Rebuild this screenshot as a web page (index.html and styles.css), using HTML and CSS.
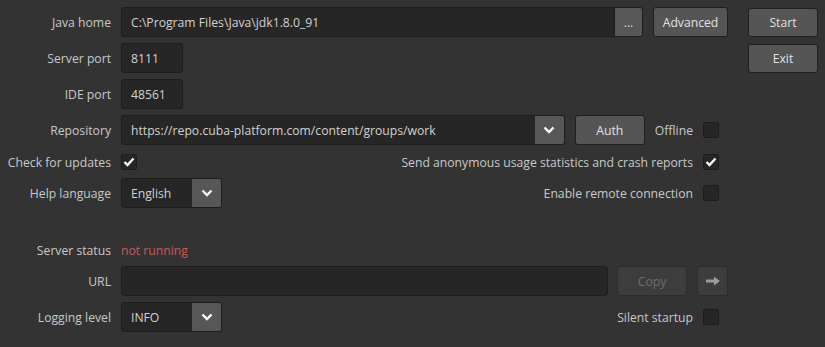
FILE: index.html
```html
<!DOCTYPE html>
<html lang="en">
<head>
    <meta charset="UTF-8">
    <title>Studio Server</title>
    <link rel="stylesheet" href="styles.css">
</head>
<body>
    <div class="layout">
        <div class="form">
            <div class="row">
                <label class="label">Java home</label>
                <div class="field grow joined">
                    <span class="value">C:\Program Files\Java\jdk1.8.0_91</span>
                    <span class="browse">...</span>
                </div>
                <button class="btn advanced">Advanced</button>
            </div>
            <div class="row">
                <label class="label">Server port</label>
                <div class="field short"><span class="value">8111</span></div>
            </div>
            <div class="row">
                <label class="label">IDE port</label>
                <div class="field short"><span class="value">48561</span></div>
            </div>
            <div class="row">
                <label class="label">Repository</label>
                <div class="field grow combo">
                    <span class="value">https://repo.cuba-platform.com/content/groups/work</span>
                    <span class="arrow">
                        <svg width="12" height="8" viewBox="0 0 12 8"><polyline points="1.5,1.5 6,6 10.5,1.5" fill="none" stroke="#fff" stroke-width="2.4"/></svg>
                    </span>
                </div>
                <button class="btn auth">Auth</button>
                <span class="opt">Offline</span>
                <span class="check"></span>
            </div>
            <div class="row small-top">
                <label class="label">Check for updates</label>
                <span class="check on">
                    <svg width="12" height="10" viewBox="0 0 12 10"><polyline points="1.5,5 4.5,8 10.5,1.5" fill="none" stroke="#fff" stroke-width="2.4"/></svg>
                </span>
                <span class="spacer"></span>
                <span class="opt">Send anonymous usage statistics and crash reports</span>
                <span class="check on">
                    <svg width="12" height="10" viewBox="0 0 12 10"><polyline points="1.5,5 4.5,8 10.5,1.5" fill="none" stroke="#fff" stroke-width="2.4"/></svg>
                </span>
            </div>
            <div class="row tight-top">
                <label class="label">Help language</label>
                <div class="field combo select">
                    <span class="value">English</span>
                    <span class="arrow">
                        <svg width="12" height="8" viewBox="0 0 12 8"><polyline points="1.5,1.5 6,6 10.5,1.5" fill="none" stroke="#fff" stroke-width="2.4"/></svg>
                    </span>
                </div>
                <span class="spacer"></span>
                <span class="opt">Enable remote connection</span>
                <span class="check"></span>
            </div>

            <div class="row status-row">
                <label class="label">Server status</label>
                <span class="status">not running</span>
            </div>
            <div class="row tight-top">
                <label class="label">URL</label>
                <div class="field grow"></div>
                <button class="btn copy" disabled>Copy</button>
                <button class="btn go" disabled>
                    <svg width="16" height="10" viewBox="0 0 16 10"><path d="M1 3.5h8V0.5L15 5 9 9.5V6.5H1z" fill="#9c9c9c"/></svg>
                </button>
            </div>
            <div class="row">
                <label class="label">Logging level</label>
                <div class="field combo select">
                    <span class="value">INFO</span>
                    <span class="arrow">
                        <svg width="12" height="8" viewBox="0 0 12 8"><polyline points="1.5,1.5 6,6 10.5,1.5" fill="none" stroke="#fff" stroke-width="2.4"/></svg>
                    </span>
                </div>
                <span class="spacer"></span>
                <span class="opt">Silent startup</span>
                <span class="check"></span>
            </div>
        </div>

        <div class="side">
            <button class="btn side-btn">Start</button>
            <button class="btn side-btn">Exit</button>
        </div>
    </div>
</body>
</html>
```

FILE: styles.css
```css
body {
    margin: 0;
    padding: 7px 0 0 0;
    background-color: #333333;
    color: #c9c9c9;
    font-family: "Open Sans", "Noto Sans", sans-serif;
    font-size: 12.2px;
}
.layout {
    display: flex;
    gap: 20px;
}
.form {
    width: 728px;
    display: flex;
    flex-direction: column;
}
.row {
    display: flex;
    align-items: center;
    height: 30px;
    margin-top: 6px;
}
.row:first-child {
    margin-top: 0;
}
.small-top {
    margin-top: 2px;
}
.tight-top {
    margin-top: 1px;
}
.status-row {
    margin-top: 27px;
}
.label {
    width: 111px;
    flex: none;
    padding-right: 10px;
    text-align: right;
    white-space: nowrap;
}
.field {
    box-sizing: border-box;
    height: 30px;
    display: flex;
    align-items: center;
    background-color: #262626;
    border: 1px solid #1d1d1d;
    border-radius: 3px;
    color: #d2d2d2;
    overflow: hidden;
}
.field .value {
    padding-left: 9px;
    flex: 1;
    white-space: nowrap;
}
.grow {
    flex: 1;
}
.short {
    width: 62px;
}
.select {
    width: 101px;
}
.browse {
    width: 27px;
    height: 100%;
    background-color: #575757;
    color: #d0d0d0;
    display: flex;
    align-items: center;
    justify-content: center;
    border-left: 1px solid #1d1d1d;
}
.arrow {
    width: 29px;
    height: 100%;
    background-color: #575757;
    display: flex;
    align-items: center;
    justify-content: center;
}
.btn {
    box-sizing: border-box;
    height: 30px;
    background-color: #555555;
    border: 1px solid #1f1f1f;
    border-radius: 3px;
    color: #e2e2e2;
    font-family: inherit;
    font-size: 12.2px;
    padding: 0;
    display: flex;
    align-items: center;
    justify-content: center;
}
.advanced {
    width: 75px;
    margin-left: 10px;
}
.auth {
    width: 70px;
    margin-left: 10px;
}
.copy {
    width: 70px;
    margin-left: 9px;
    background-color: #3d3d3d;
    border-color: #2c2c2c;
    color: #6d6d6d;
}
.go {
    width: 31px;
    margin-left: 10px;
    background-color: #3d3d3d;
    border-color: #2c2c2c;
}
.opt {
    white-space: nowrap;
    margin-left: 10px;
}
.spacer {
    flex: 1;
}
.check {
    box-sizing: border-box;
    width: 16px;
    height: 16px;
    flex: none;
    background-color: #262626;
    border: 1px solid #1d1d1d;
    border-radius: 2px;
    margin-left: 10px;
    margin-right: 9px;
    display: flex;
    align-items: center;
    justify-content: center;
}
.row .label + .check {
    margin-left: 0;
}
.status {
    color: #c85a5a;
}
.side {
    width: 70px;
    padding-top: 1px;
    display: flex;
    flex-direction: column;
    gap: 7px;
}
.side-btn {
    width: 70px;
    height: 29px;
}
```
